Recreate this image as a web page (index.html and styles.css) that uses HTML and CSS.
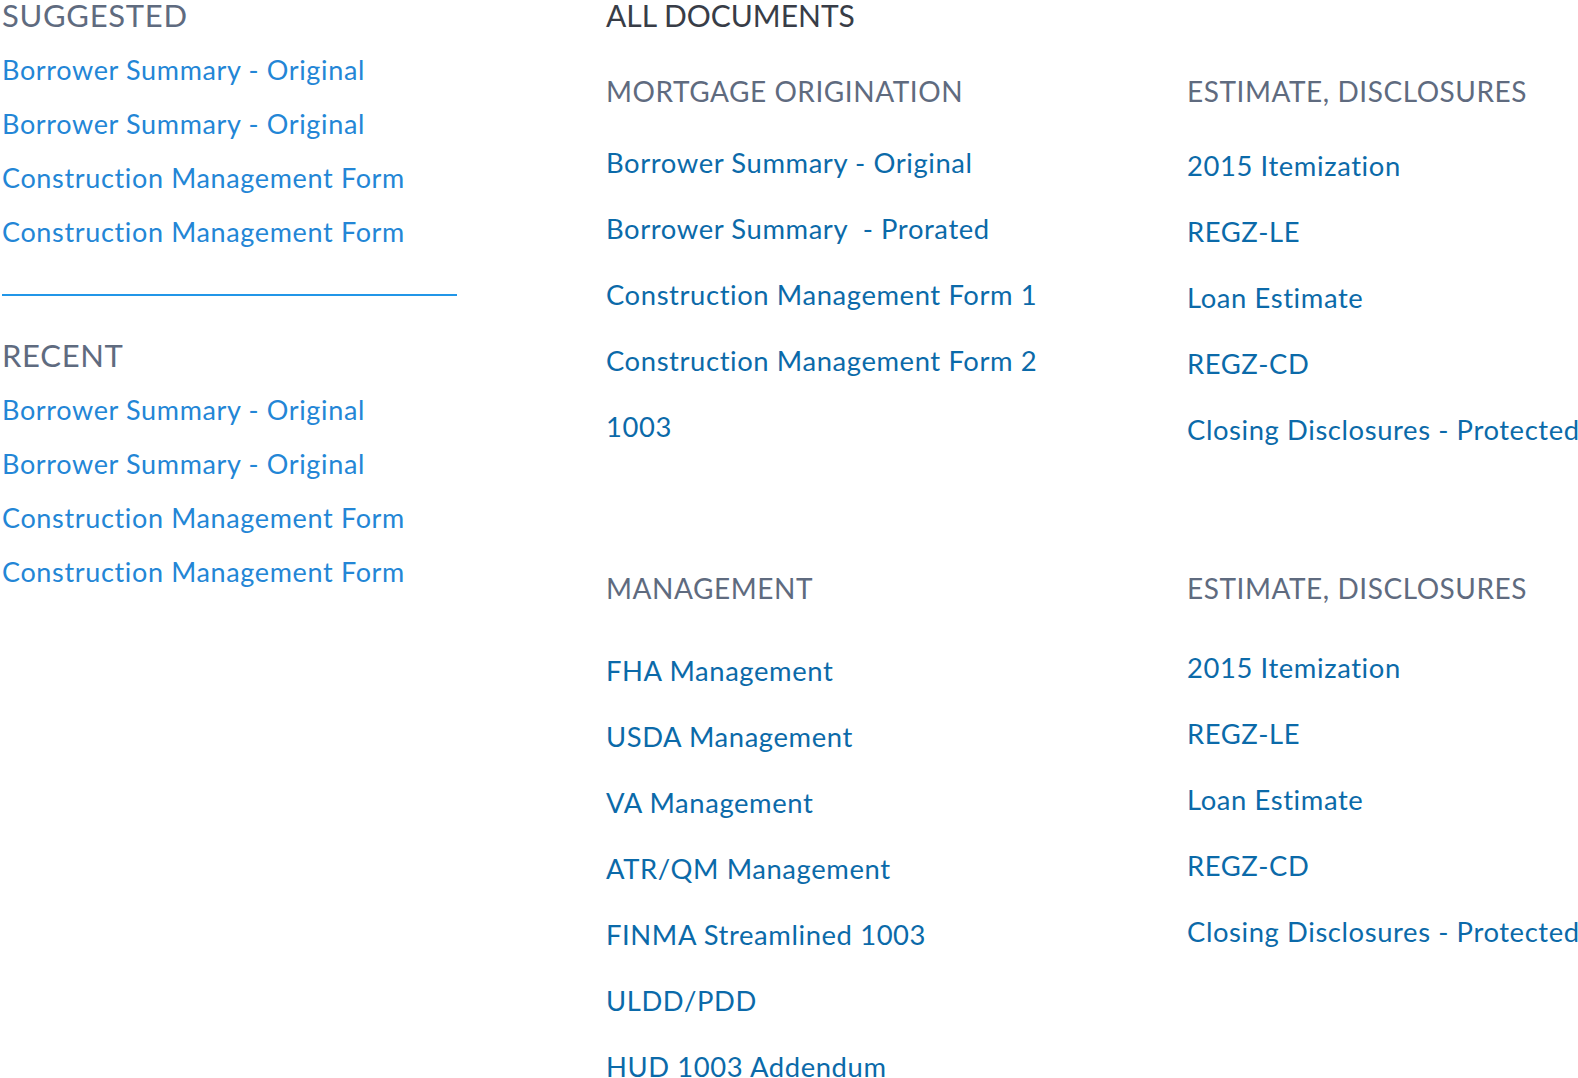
FILE: index.html
```html
<!DOCTYPE html>
<html lang="en">
<head>
<meta charset="utf-8">
<title>Documents</title>
<link rel="stylesheet" href="styles.css">
</head>
<body>
<div class="page">
  <aside class="side">
    <h2 class="side-title">SUGGESTED</h2>
    <ul class="side-list">
      <li><a href="#">Borrower Summary - Original</a></li>
      <li><a href="#">Borrower Summary - Original</a></li>
      <li><a href="#">Construction Management Form</a></li>
      <li><a href="#">Construction Management Form</a></li>
    </ul>
    <hr class="divider">
    <h2 class="side-title">RECENT</h2>
    <ul class="side-list">
      <li><a href="#">Borrower Summary - Original</a></li>
      <li><a href="#">Borrower Summary - Original</a></li>
      <li><a href="#">Construction Management Form</a></li>
      <li><a href="#">Construction Management Form</a></li>
    </ul>
  </aside>
  <main class="main">
    <h1 class="main-title">ALL DOCUMENTS</h1>
    <div class="docs">
      <section class="group group-top">
        <h3 class="group-title">MORTGAGE ORIGINATION</h3>
        <ul class="doc-list">
          <li><a href="#">Borrower Summary - Original</a></li>
          <li><a href="#">Borrower Summary&nbsp; - Prorated</a></li>
          <li><a href="#">Construction Management Form 1</a></li>
          <li><a href="#">Construction Management Form 2</a></li>
          <li><a href="#">1003</a></li>
        </ul>
      </section>
      <section class="group group-top group-right">
        <h3 class="group-title">ESTIMATE, DISCLOSURES</h3>
        <ul class="doc-list">
          <li><a href="#">2015 Itemization</a></li>
          <li><a href="#">REGZ-LE</a></li>
          <li><a href="#">Loan Estimate</a></li>
          <li><a href="#">REGZ-CD</a></li>
          <li><a href="#">Closing Disclosures - Protected</a></li>
        </ul>
      </section>
      <section class="group group-bottom">
        <h3 class="group-title">MANAGEMENT</h3>
        <ul class="doc-list">
          <li><a href="#">FHA Management</a></li>
          <li><a href="#">USDA Management</a></li>
          <li><a href="#">VA Management</a></li>
          <li><a href="#">ATR/QM Management</a></li>
          <li><a href="#">FINMA Streamlined 1003</a></li>
          <li><a href="#">ULDD/PDD</a></li>
          <li><a href="#">HUD 1003 Addendum</a></li>
        </ul>
      </section>
      <section class="group group-bottom group-right">
        <h3 class="group-title">ESTIMATE, DISCLOSURES</h3>
        <ul class="doc-list">
          <li><a href="#">2015 Itemization</a></li>
          <li><a href="#">REGZ-LE</a></li>
          <li><a href="#">Loan Estimate</a></li>
          <li><a href="#">REGZ-CD</a></li>
          <li><a href="#">Closing Disclosures - Protected</a></li>
        </ul>
      </section>
    </div>
  </main>
</div>
</body>
</html>
```

FILE: styles.css
```css
html, body {
  margin: 0;
  padding: 0;
  background: #ffffff;
}

body {
  font-family: Lato, "Open Sans", "Liberation Sans", sans-serif;
  overflow: hidden;
  width: 1578px;
  height: 1078px;
}

ul {
  list-style: none;
  margin: 0;
  padding: 0;
}

a {
  text-decoration: none;
  white-space: nowrap;
}

.page {
  display: grid;
  grid-template-columns: 606px 1fr;
}

/* left sidebar */
.side {
  padding-left: 2px;
}

.side-title {
  margin: 0;
  font-size: 31px;
  line-height: 30px;
  font-weight: 400;
  color: #5f6b7f;
  letter-spacing: 0.7px;
}

.side-list {
  margin-top: 13px;
}

.side-list li {
  font-size: 27px;
  line-height: 54px;
  letter-spacing: 0.65px;
}

.side-list a {
  color: #2386d6;
}

.divider {
  margin: 35px 0 44px 0;
  width: 455px;
  height: 2px;
  border: 0;
  background: #2196e8;
}

/* main documents area */
.main {
  min-width: 0;
}

.main-title {
  margin: 0 0 46px 0;
  font-size: 30px;
  line-height: 30px;
  font-weight: 400;
  color: #383d47;
  letter-spacing: 0;
}

.docs {
  display: grid;
  grid-template-columns: 578px 1fr;
  row-gap: 110px;
}

.group {
  min-width: 0;
}

.group-right {
  padding-left: 3px;
}

.group-title {
  margin: 0;
  font-size: 28px;
  line-height: 30px;
  font-weight: 400;
  color: #5f6b7f;
  letter-spacing: 0.55px;
}

.doc-list li {
  font-size: 27.4px;
  line-height: 66px;
  letter-spacing: 0.6px;
}

.doc-list a {
  color: #0b6aa9;
}

.group-top .doc-list {
  margin-top: 24px;
}

.group-top.group-right .doc-list {
  margin-top: 27px;
}

.group-bottom .doc-list {
  margin-top: 35px;
}

.group-bottom.group-right .doc-list {
  margin-top: 32px;
}
```
